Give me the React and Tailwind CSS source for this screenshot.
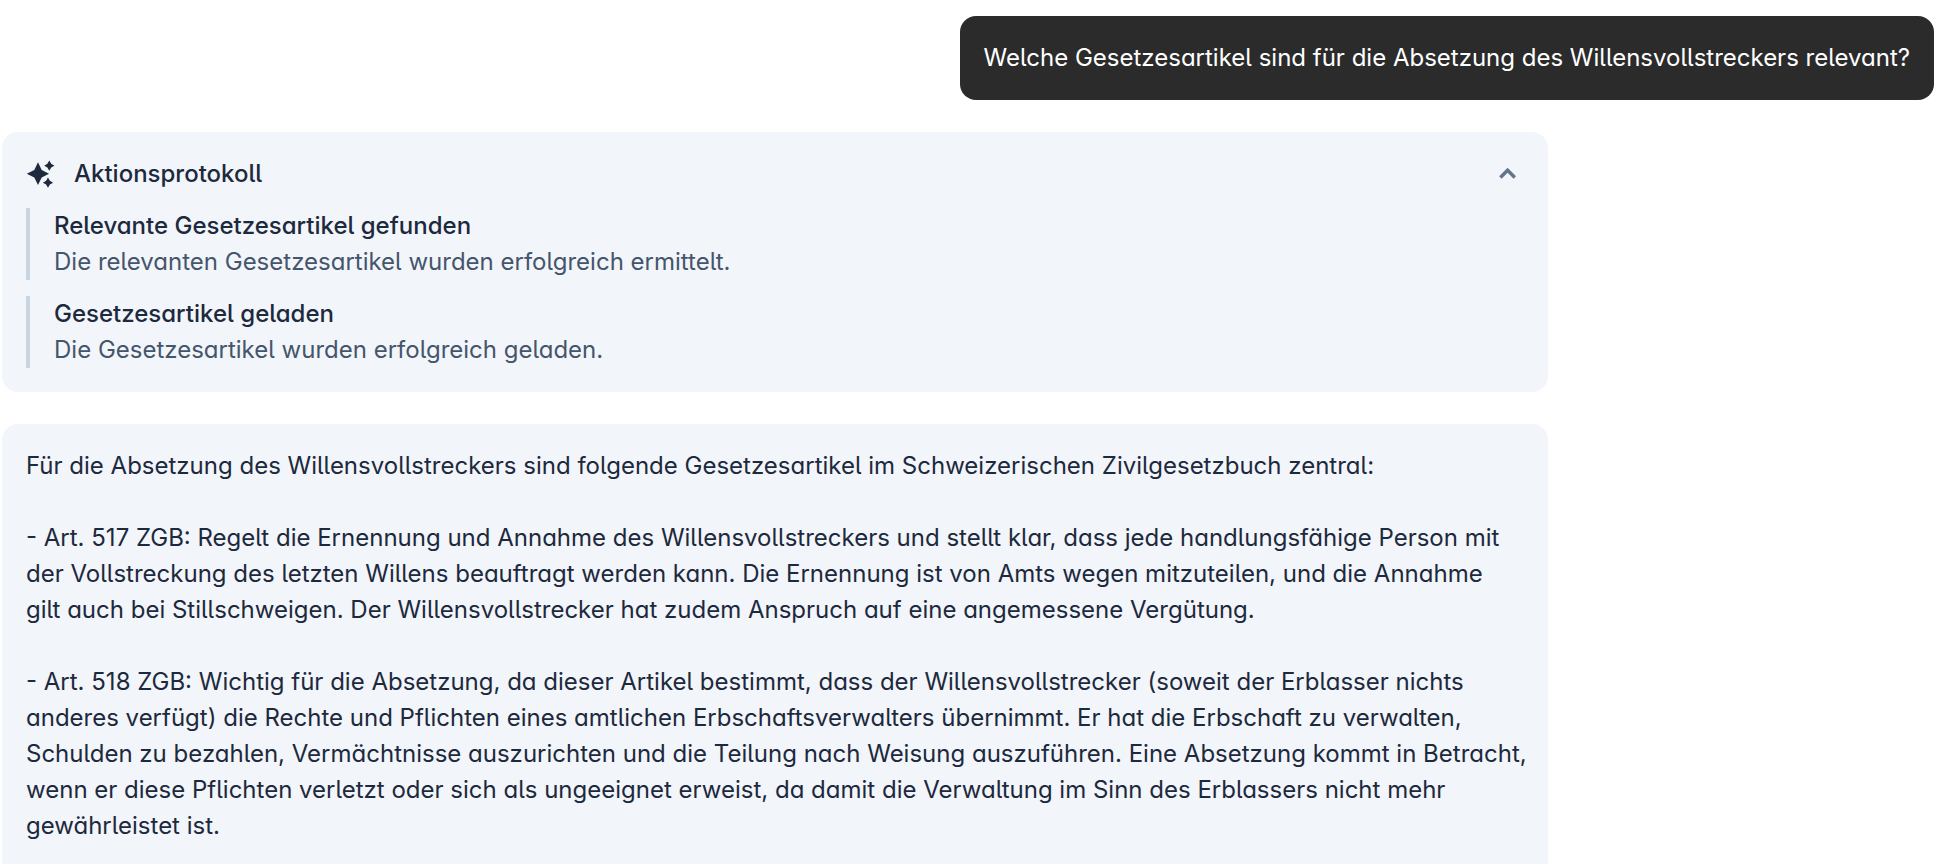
import { useState } from "react";

const steps = [
  { title: "Relevante Gesetzesartikel gefunden", text: "Die relevanten Gesetzesartikel wurden erfolgreich ermittelt." },
  { title: "Gesetzesartikel geladen", text: "Die Gesetzesartikel wurden erfolgreich geladen." },
];

const answer = [
  "Für die Absetzung des Willensvollstreckers sind folgende Gesetzesartikel im Schweizerischen Zivilgesetzbuch zentral:",
  "- Art. 517 ZGB: Regelt die Ernennung und Annahme des Willensvollstreckers und stellt klar, dass jede handlungsfähige Person mit der Vollstreckung des letzten Willens beauftragt werden kann. Die Ernennung ist von Amts wegen mitzuteilen, und die Annahme\ngilt auch bei Stillschweigen. Der Willensvollstrecker hat zudem Anspruch auf eine angemessene Vergütung.",
  "- Art. 518 ZGB: Wichtig für die Absetzung, da dieser Artikel bestimmt, dass der Willensvollstrecker (soweit der Erblasser nichts anderes verfügt) die Rechte und Pflichten eines amtlichen Erbschaftsverwalters übernimmt. Er hat die Erbschaft zu verwalten, Schulden zu bezahlen, Vermächtnisse auszurichten und die Teilung nach Weisung auszuführen. Eine Absetzung kommt in Betracht, wenn er diese Pflichten verletzt oder sich als ungeeignet erweist, da damit die Verwaltung im Sinn des Erblassers nicht mehr gewährleistet ist.",
];

function SparklesIcon() {
  return (
    <svg viewBox="0 0 32 32" className="size-8 shrink-0" fill="currentColor" aria-hidden="true">
      <path d="M12 4.300 L15.700 12 L23 15.700 L15.700 19.400 L12 27.100 L8.300 19.400 L0.800 15.700 L8.300 12 Z" />
      <path d="M23.300 2.600 L25.200 5.800 L28.400 7.700 L25.200 9.600 L23.300 12.800 L21.400 9.600 L18.200 7.700 L21.400 5.800 Z" />
      <path d="M22 19.600 L23.900 22.800 L27.100 24.700 L23.900 26.600 L22 29.800 L20.100 26.600 L16.900 24.700 L20.100 22.800 Z" />
    </svg>
  );
}

function ChevronIcon({ open }) {
  return (
    <svg viewBox="0 0 32 32" className={open ? "size-8" : "size-8 rotate-180"} fill="none" stroke="currentColor" strokeWidth="3.400" aria-hidden="true">
      <path d="M8.400 19.500 L15.600 12.200 L22.800 19.500" />
    </svg>
  );
}

export default function App() {
  const [open, setOpen] = useState(true);
  return (
    <main className="flex min-h-screen flex-col gap-8 bg-white pt-4 pr-[18px] pl-0.5 font-['Inter',sans-serif] text-[24px] leading-9 text-slate-800 [font-feature-settings:'cv05','cv11']">
      <p className="max-w-4/5 self-end rounded-2xl bg-[#2b2b2b] p-6 text-white">
        Welche Gesetzesartikel sind für die Absetzung des Willensvollstreckers relevant?
      </p>

      <section className="flex w-4/5 flex-col gap-4 rounded-2xl bg-[#f2f5fa] p-6">
        <button type="button" aria-expanded={open} onClick={() => setOpen(!open)} className="flex items-center gap-4 text-left font-medium">
          <SparklesIcon />
          <span className="flex-1">Aktionsprotokoll</span>
          <span className="text-slate-500"><ChevronIcon open={open} /></span>
        </button>
        {open && steps.map((step) => (
          <div key={step.title} className="border-l-4 border-slate-300 pl-6">
            <h3 className="font-medium">{step.title}</h3>
            <p className="text-slate-600">{step.text}</p>
          </div>
        ))}
      </section>

      <section className="flex w-4/5 grow flex-col gap-9 rounded-t-2xl bg-[#f2f5fa] pt-6 pr-5 pb-5 pl-6">
        {answer.map((paragraph) => (
          <p key={paragraph} className="whitespace-pre-line">{paragraph}</p>
        ))}
      </section>
    </main>
  );
}
